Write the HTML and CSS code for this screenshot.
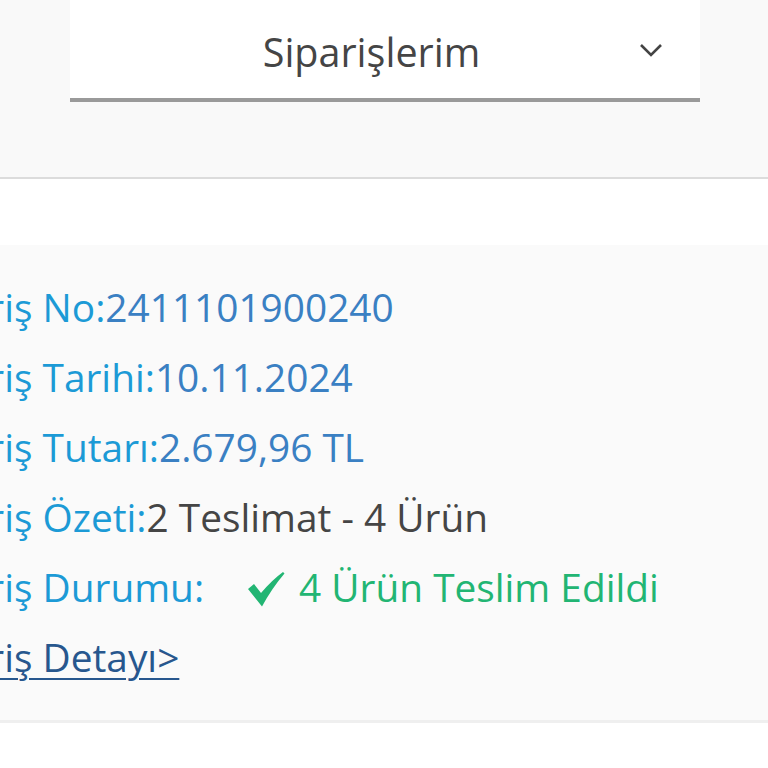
FILE: index.html
```html
<!DOCTYPE html>
<html lang="tr">
<head>
<meta charset="utf-8">
<link rel="stylesheet" href="styles.css">
</head>
<body>
<header class="top">
  <div class="select">
    <span class="select-text">Siparişlerim</span>
    <svg class="chevron" width="24" height="14" viewBox="0 0 24 14"><path d="M2 2 L12 12 L22 2" fill="none" stroke="#444" stroke-width="2.6"/></svg>
  </div>
</header>
<div class="spacer"></div>
<section class="card">
  <div class="row"><span class="label">Sipariş No:</span><span class="value">2411101900240</span></div>
  <div class="row"><span class="label">Sipariş Tarihi:</span><span class="value">10.11.2024</span></div>
  <div class="row"><span class="label">Sipariş Tutarı:</span><span class="value">2.679,96 TL</span></div>
  <div class="row"><span class="label">Sipariş Özeti:</span><span class="dark">2 Teslimat - 4 Ürün</span></div>
  <div class="row"><span class="label">Sipariş Durumu:</span>
    <span class="status"><svg class="check" width="37" height="35" viewBox="0 0 37 35"><path d="M0 17 L6 12 L13 21 Q24 8 35 0 L36.5 1.5 Q24 16 14 34.5 Z" fill="#22b573"/></svg>4 Ürün Teslim Edildi</span>
  </div>
  <div class="row"><a class="detail" href="#">Sipariş Detayı&gt;</a></div>
</section>
</body>
</html>
```
FILE: styles.css
```css
html, body {
  margin: 0;
  padding: 0;
  background: #ffffff;
  font-family: "Open Sans", "Noto Sans", sans-serif;
  overflow: hidden;
}
.top {
  background: #f9f9f9;
  height: 179px;
  border-bottom: 2px solid #dcdcdc;
  padding-left: 70px;
  padding-right: 68px;
  box-sizing: border-box;
}
.select {
  background: #ffffff;
  height: 98px;
  border-bottom: 4px solid #9a9a9a;
  display: flex;
  align-items: center;
  padding-right: 37px;
}
.select-text {
  flex: 1;
  text-align: center;
  font-size: 39.5px;
  color: #454545;
  padding-left: 34px;
  padding-top: 5px;
}
.chevron {
  display: block;
  margin-top: 2px;
}
.spacer {
  height: 66px;
}
.card {
  background: #fafafa;
  border-bottom: 3px solid #efefef;
  padding: 27px 0 28px 0;
  margin-left: -88px;
}
.row {
  height: 70px;
  display: flex;
  align-items: center;
  font-size: 38.8px;
  white-space: nowrap;
}
.label {
  color: #1c9ad6;
}
.value {
  color: #3a80c3;
}
.dark {
  color: #454545;
}
.status {
  display: flex;
  align-items: center;
  color: #22b573;
  margin-left: 44px;
}
.check {
  margin-right: 14px;
  margin-top: 4px;
}
.detail {
  color: #27578e;
  text-decoration: underline;
  text-decoration-thickness: 2px;
  text-underline-offset: 6px;
}
```
